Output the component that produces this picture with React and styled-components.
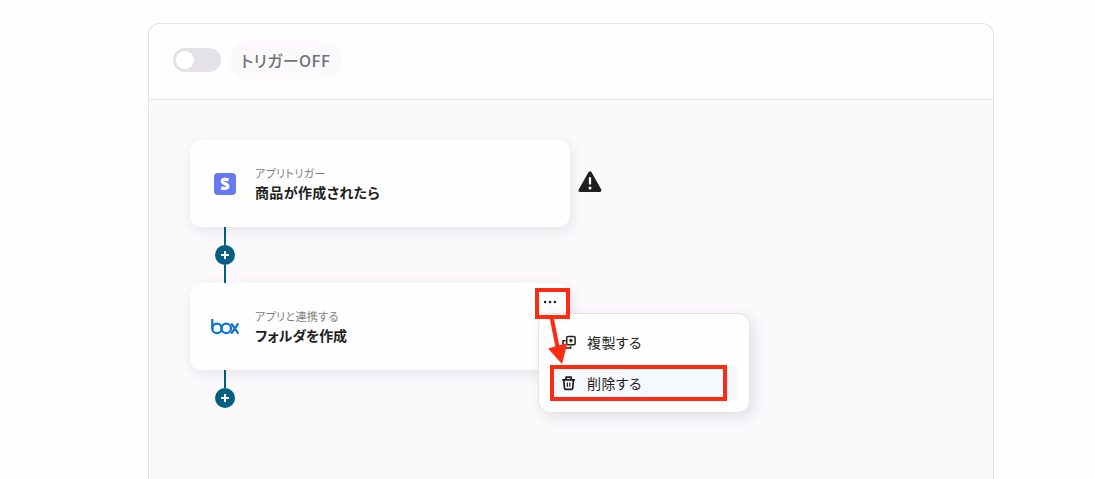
import React from 'react'
import styled, { createGlobalStyle } from 'styled-components'

const GlobalStyle = createGlobalStyle`
* {
  box-sizing: border-box;
}

body {
  margin: 0;
  background-color: #fefefe;
  font-family: "Noto Sans CJK JP", "Noto Sans", sans-serif;
  color: #1f1f21;
  overflow: hidden;
}
`

const Page = styled.div`
display: flex;
flex-direction: column;
height: 100vh;
padding: 23px 101px 0 148px;
`

const Panel = styled.main`
display: flex;
flex-direction: column;
flex: 1;
border: 1px solid #e4e3e6;
border-bottom: 0;
border-radius: 12px 12px 0 0;
background-color: #fefefe;
overflow: hidden;
`

const Header = styled.header`
display: flex;
align-items: center;
height: 76px;
padding: 0 24px 3px;
border-bottom: 1px solid #e4e3e6;
`

const Toggle = styled.button`
display: flex;
align-items: center;
width: 48px;
height: 24px;
padding: 0 3px;
border: 0;
border-radius: 12px;
background-color: #e4e2e6;
`

const Knob = styled.span`
width: 18px;
height: 18px;
border-radius: 50%;
background-color: #fff;
`

const TriggerLabel = styled.span`
display: flex;
align-items: center;
height: 38px;
margin-left: 8px;
padding: 0 12px;
border-radius: 19px;
background-color: #fbf9fc;
color: #737274;
font-size: 16px;
font-weight: 500;
letter-spacing: 0.4px;
font-feature-settings: "palt";
`

const Flow = styled.section`
display: flex;
flex-direction: column;
flex: 1;
align-items: flex-start;
padding: 40px 41px 0;
background-color: #fbf9fc;
`

const Row = styled.div`
display: flex;
align-items: center;
position: relative;
`

const Card = styled.div`
display: flex;
align-items: center;
width: 380px;
height: 87px;
padding-left: 19px;
border-radius: 12px;
background-color: #fefefe;
box-shadow: 2px 4px 14px rgba(30, 20, 40, 0.09);
`

const CardIcon = styled.div`
display: flex;
align-items: center;
justify-content: center;
width: 32px;
height: 32px;
margin-right: 14px;
padding-top: ${props => props.$drop || 0}px;
`

const CardText = styled.div`
display: flex;
flex-direction: column;
padding-bottom: 2px;
font-feature-settings: "palt";
`

const CardCaption = styled.span`
color: #7d7c80;
font-size: 11px;
line-height: 18px;
letter-spacing: 0.35px;
`

const CardTitle = styled.span`
font-size: 14px;
font-weight: 700;
line-height: 20px;
letter-spacing: ${props => props.$spacing || 0}px;
`

const StripeBadge = styled.div`
display: flex;
align-items: center;
justify-content: center;
width: 22px;
height: 22px;
border-radius: 4px;
background-color: #6679f0;
`

const Warning = styled.svg`
margin: -3px 0 0 8px;
`

const Connector = styled.div`
display: flex;
flex-direction: column;
align-items: center;
width: 20px;
margin-left: 25px;
`

const Line = styled.span`
width: 2px;
height: ${props => props.$height}px;
background-color: #045f82;
`

const AddButton = styled.button`
display: flex;
align-items: center;
justify-content: center;
width: 20px;
height: 20px;
padding: 0;
border: 0;
border-radius: 50%;
background-color: #045f82;
`

const MoreButton = styled.button`
position: absolute;
top: 12px;
left: 352px;
display: flex;
padding: 0;
border: 0;
background: none;
`

const Menu = styled.div`
position: absolute;
top: 30px;
left: 348px;
display: flex;
flex-direction: column;
gap: 8px;
width: 212px;
height: 100px;
padding: 12px;
border: 1px solid #e4e3e6;
border-radius: 12px;
background-color: #fefefe;
box-shadow: 4px 4px 14px rgba(30, 20, 40, 0.1);
`

const MenuItem = styled.div`
display: flex;
align-items: center;
height: 33px;
padding: 0 0 2px 10px;
background-color: ${props => props.$active ? '#f5f8fc' : 'transparent'};
font-size: 14px;
letter-spacing: 0.4px;
font-feature-settings: "palt";

& > svg {
  margin-right: 10px;
}
`

const Highlight = styled.div`
position: absolute;
top: ${props => props.$top}px;
left: ${props => props.$left}px;
width: ${props => props.$width}px;
height: ${props => props.$height}px;
border: 4px solid #fb2c12;
`

const Arrow = styled.svg`
position: absolute;
top: 32px;
left: 355px;
`

const Plus = () => (
  <svg width="10" height="10" viewBox="0 0 10 10" stroke="#fff" strokeWidth="2">
    <path d="M5 1v8M1 5h8"/>
  </svg>
)

const StripeIcon = () => (
  <StripeBadge>
    <svg width="12" height="14" viewBox="0 0 12 14" fill="none" stroke="#fff" strokeWidth="3.2">
      <path d="M9.6 2.9C7.8 2.2 3.3 1.6 3.3 4.3c0 3 5.6 2 5.6 4.9 0 2.8-4.4 2.5-6.7 1.5"/>
    </svg>
  </StripeBadge>
)

const BoxIcon = () => (
  <svg width="30" height="18" viewBox="0 0 30 18" fill="none" stroke="#0f73d4" strokeWidth="2.3" strokeLinecap="round">
    <path d="M2.3 1.8v9"/>
    <circle cx="7" cy="10.4" r="4.7"/>
    <circle cx="16.3" cy="10.4" r="4.7"/>
    <path d="M21.8 6.2l6 8.6M27.8 6.2l-6 8.6"/>
  </svg>
)

const CopyIcon = () => (
  <svg width="16" height="16" viewBox="0 0 16 16" fill="none" stroke="#1f1f21" strokeWidth="1.5">
    <rect x="5.7" y="2.4" width="8.4" height="8.4" rx="1.2"/>
    <path d="M9.9 4.8v3.6M8.1 6.6h3.6M4.6 6.8H2v7.2h7.6v-1.8"/>
  </svg>
)

const TrashIcon = () => (
  <svg width="16" height="16" viewBox="0 0 16 16" fill="none" stroke="#1f1f21" strokeWidth="1.7">
    <path d="M1.2 4.9h12.8M4.7 4.7l.5-2.5H10l.5 2.5M2.8 5l.7 8.1c.1.8.5 1.2 1.2 1.2h5.8c.7 0 1.1-.4 1.2-1.2l.7-8.1"/>
    <path d="M6.4 7.4v4.3M8.8 7.4v4.3" strokeWidth="1.2"/>
  </svg>
)

const App = () => (
  <Page>
    <GlobalStyle/>
    <Panel>
      <Header>
        <Toggle><Knob/></Toggle>
        <TriggerLabel>トリガーOFF</TriggerLabel>
      </Header>
      <Flow>
        <Row>
          <Card>
            <CardIcon $drop={1}><StripeIcon/></CardIcon>
            <CardText>
              <CardCaption>アプリトリガー</CardCaption>
              <CardTitle $spacing={0.35}>商品が作成されたら</CardTitle>
            </CardText>
          </Card>
          <Warning width="24" height="22" viewBox="0 0 24 22">
            <path d="M12 2.2L2.3 19.3h19.4z" fill="#1f1f21" stroke="#1f1f21" strokeWidth="3.6" strokeLinejoin="round"/>
            <path d="M12 7.2v5.4" stroke="#fff" strokeWidth="2.3" strokeLinecap="round"/>
            <circle cx="12" cy="17" r="1.5" fill="#fff"/>
          </Warning>
        </Row>
        <Connector>
          <Line $height={18}/>
          <AddButton><Plus/></AddButton>
          <Line $height={18}/>
        </Connector>
        <Row>
          <Card>
            <CardIcon><BoxIcon/></CardIcon>
            <CardText>
              <CardCaption>アプリと連携する</CardCaption>
              <CardTitle $spacing={-0.1}>フォルダを作成</CardTitle>
            </CardText>
          </Card>
          <MoreButton>
            <svg width="16" height="14" viewBox="0 0 16 14" fill="#1f1f21">
              <circle cx="3.1" cy="7" r="1.3"/>
              <circle cx="8" cy="7" r="1.3"/>
              <circle cx="12.9" cy="7" r="1.3"/>
            </svg>
          </MoreButton>
          <Menu>
            <MenuItem><CopyIcon/>複製する</MenuItem>
            <MenuItem $active><TrashIcon/>削除する</MenuItem>
          </Menu>
          <Highlight $top={5} $left={345} $width={35} $height={31}/>
          <Highlight $top={82} $left={360} $width={177} $height={36}/>
          <Arrow width="28" height="52" viewBox="0 0 28 52">
            <path d="M6.5 2l6 30" stroke="#fb2c12" strokeWidth="4"/>
            <path d="M3 33.5L22.5 28 17 49z" fill="#fb2c12"/>
          </Arrow>
        </Row>
        <Connector>
          <Line $height={18}/>
          <AddButton><Plus/></AddButton>
        </Connector>
      </Flow>
    </Panel>
  </Page>
)

export default App
